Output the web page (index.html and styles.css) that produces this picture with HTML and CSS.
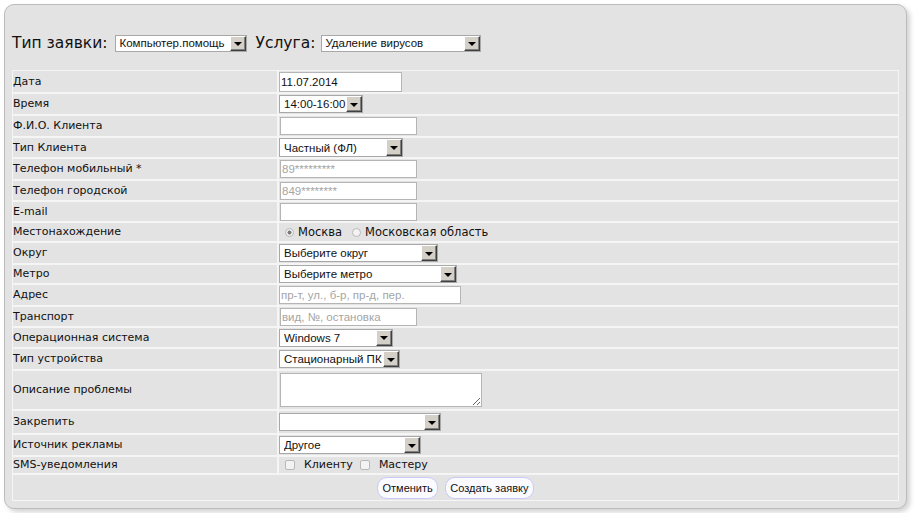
FILE: index.html
```html
<!DOCTYPE html>
<html lang="ru">
<head>
    <meta charset="UTF-8">
    <title>Новая заявка</title>
    <link rel="stylesheet" href="styles.css">
</head>
<body>

    <div class="panel">
        <div class="head">
            <span class="big">Тип заявки:</span>
            <span class="sel sel-type"><select><option>Компьютер.помощь</option></select><span class="btn"></span></span>
            <span class="big">Услуга:</span>
            <span class="sel sel-service"><select><option>Удаление вирусов</option></select><span class="btn"></span></span>
        </div>

        <table class="form">
            <tr>
                <td class="lbl">Дата</td>
                <td><input type="text" class="inp inp-date" value="11.07.2014"></td>
            </tr>
            <tr>
                <td class="lbl">Время</td>
                <td><span class="sel sel-time"><select><option>14:00-16:00</option></select><span class="btn"></span></span></td>
            </tr>
            <tr>
                <td class="lbl">Ф.И.О. Клиента</td>
                <td><input type="text" class="inp"></td>
            </tr>
            <tr class="h19">
                <td class="lbl">Тип Клиента</td>
                <td><span class="sel sel-client"><select><option>Частный (ФЛ)</option></select><span class="btn"></span></span></td>
            </tr>
            <tr>
                <td class="lbl">Телефон мобильный *</td>
                <td><input type="text" class="inp" placeholder="89*********"></td>
            </tr>
            <tr class="h19">
                <td class="lbl">Телефон городской</td>
                <td><input type="text" class="inp" placeholder="849********"></td>
            </tr>
            <tr class="h19">
                <td class="lbl">E-mail</td>
                <td><input type="text" class="inp"></td>
            </tr>
            <tr class="h18">
                <td class="lbl">Местонахождение</td>
                <td>
                    <div class="opts">
                        <label><input type="radio" name="loc" checked>Москва</label>
                        <label><input type="radio" name="loc">Московская область</label>
                    </div>
                </td>
            </tr>
            <tr>
                <td class="lbl">Округ</td>
                <td><span class="sel sel-okrug"><select><option>Выберите округ</option></select><span class="btn"></span></span></td>
            </tr>
            <tr class="h18">
                <td class="lbl">Метро</td>
                <td><span class="sel sel-metro"><select><option>Выберите метро</option></select><span class="btn"></span></span></td>
            </tr>
            <tr>
                <td class="lbl">Адрес</td>
                <td><input type="text" class="inp inp-addr" placeholder="пр-т, ул., б-р, пр-д, пер."></td>
            </tr>
            <tr class="h19">
                <td class="lbl">Транспорт</td>
                <td><input type="text" class="inp" placeholder="вид, №, остановка"></td>
            </tr>
            <tr class="h19">
                <td class="lbl">Операционная система</td>
                <td><span class="sel sel-os"><select><option>Windows 7</option></select><span class="btn"></span></span></td>
            </tr>
            <tr>
                <td class="lbl">Тип устройства</td>
                <td><span class="sel sel-device"><select><option>Стационарный ПК</option></select><span class="btn"></span></span></td>
            </tr>
            <tr class="h38">
                <td class="lbl">Описание проблемы</td>
                <td><textarea class="txt"></textarea></td>
            </tr>
            <tr class="h22">
                <td class="lbl">Закрепить</td>
                <td><span class="sel sel-fix"><select><option></option></select><span class="btn"></span></span></td>
            </tr>
            <tr>
                <td class="lbl">Источник рекламы</td>
                <td><span class="sel sel-source"><select><option>Другое</option></select><span class="btn"></span></span></td>
            </tr>
            <tr class="h16">
                <td class="lbl">SMS-уведомления</td>
                <td>
                    <div class="opts checks">
                        <label><input type="checkbox">Клиенту</label>
                        <label><input type="checkbox">Мастеру</label>
                    </div>
                </td>
            </tr>
            <tr class="h25">
                <td colspan="2" class="actions">
                    <button class="button">Отменить</button>
                    <button class="button">Создать заявку</button>
                </td>
            </tr>
        </table>
    </div>

</body>
</html>
```

FILE: styles.css
```css
body {
    margin: 0;
    background-color: #fff;
    font-family: "DejaVu Sans", Verdana, sans-serif;
    font-size: 11px;
    color: #111;
}
.panel {
    margin: 4px;
    width: 888px;
    padding: 0 6px 7px 7px;
    background-color: #e3e3e3;
    border: 1px solid #bcbcbc;
    border-radius: 10px;
    box-shadow: 3px 3px 5px rgba(0, 0, 0, 0.18);
}
.head {
    display: flex;
    align-items: center;
    height: 18px;
    margin: 29px 0 18px 0;
}
.big {
    font-size: 15.5px;
    color: #111;
    margin-right: 8px;
}
.sel + .big {
    margin-left: 8px;
    margin-right: 6px;
}

/* fake windows-classic select */
.sel {
    display: inline-flex;
    box-sizing: border-box;
    height: 18px;
    border: 1px solid #a8a8a8;
    background-color: #fff;
    vertical-align: middle;
}
.sel select {
    appearance: none;
    -webkit-appearance: none;
    flex: 1;
    min-width: 0;
    margin-right: -14px;
    border: none;
    background: transparent;
    font-family: "Liberation Sans", Arial, sans-serif;
    font-size: 11.5px;
    color: #111;
    padding: 0 0 0 4px;
    outline: none;
}
.head .sel select {
    font-size: 11.5px;
    padding: 0 0 0 3px;
}
.sel .btn {
    position: relative;
    display: flex;
    align-items: center;
    justify-content: center;
    box-sizing: border-box;
    flex: none;
    width: 16px;
    background-color: #d4d0c8;
    border-top: 1px solid #fff;
    border-left: 1px solid #fff;
    border-right: 1px solid #404040;
    border-bottom: 1px solid #404040;
    box-shadow: inset -1px -1px 0 #808080;
}
.sel .btn::after {
    content: "";
    border-left: 4px solid transparent;
    border-right: 4px solid transparent;
    border-top: 4px solid #000;
    margin-top: 1px;
}
.sel-type { width: 132px; height: 17px; }
.sel-service { width: 160px; height: 17px; }
.sel-time { width: 84px; }
.sel-client { width: 124px; height: 19px; }
.sel-okrug { width: 159px; }
.sel-metro { width: 178px; }
.sel-os { width: 114px; }
.sel-device { width: 121px; }
.sel-fix { width: 162px; }
.sel-source { width: 142px; }

.form {
    width: 887px;
    border: 1px solid #f5f5f5;
    border-spacing: 0;
}
.form td {
    height: 20px;
    padding: 0;
    border-top: 2px solid #f5f5f5;
    vertical-align: middle;
    line-height: 14px;
}
.form tr:first-child td {
    border-top: none;
    height: 21px;
}
.form td.lbl {
    width: 264px;
    border-right: 2px solid #f5f5f5;
    padding-left: 0;
}
.form .h19 td { height: 19px; }
.form .h18 td { height: 18px; }
.form .h16 td { height: 16px; }
.form .h22 td { height: 22px; }
.form .h25 td { height: 25px; }
.form .h38 td { height: 38px; }

.inp {
    box-sizing: border-box;
    width: 137px;
    height: 18px;
    margin: 0 0 0 1px;
    padding: 0 1px;
    border: 1px solid #b5b5b5;
    background-color: #fff;
    font-family: "Liberation Sans", Arial, sans-serif;
    font-size: 11.5px;
    color: #111;
    vertical-align: middle;
    outline: none;
}
.inp::placeholder {
    color: #a5a5a5;
}
.inp-date {
    width: 123px;
    height: 20px;
    margin-left: 0;
}
.inp-addr {
    width: 182px;
    margin-left: 0;
}
.txt {
    display: block;
    box-sizing: border-box;
    width: 202px;
    height: 34px;
    margin-left: 1px;
    border: 1px solid #b5b5b5;
    background-color: #fff;
    resize: both;
}

.opts {
    display: flex;
    align-items: center;
    padding-left: 6px;
    font-size: 11.5px;
    color: #111;
}
.opts label {
    display: inline-flex;
    align-items: center;
    gap: 4px;
    margin-right: 10px;
}
.opts input {
    appearance: none;
    -webkit-appearance: none;
    box-sizing: border-box;
    width: 9px;
    height: 9px;
    margin: 0;
    border: 1px solid #b8b8b8;
    background-color: #f3f3f3;
}
.opts input[type=radio] {
    border-radius: 50%;
}
.opts input[type=radio]:checked {
    background: radial-gradient(circle, #7a7a7a 0 1.8px, #f3f3f3 2.3px);
}
.checks {
    font-size: 11px;
}
.checks label {
    gap: 9px;
    margin-right: 7px;
}
.checks input {
    width: 10px;
    height: 10px;
    border-radius: 2px;
}

.actions {
    text-align: center;
}
.button {
    height: 22px;
    padding: 0 4px;
    margin: 0 2px;
    background-color: #fbfbff;
    border: 1px solid #c9c9f5;
    border-radius: 10px;
    font-family: "Liberation Sans", Arial, sans-serif;
    font-size: 11px;
    color: #111;
    cursor: pointer;
}
```
